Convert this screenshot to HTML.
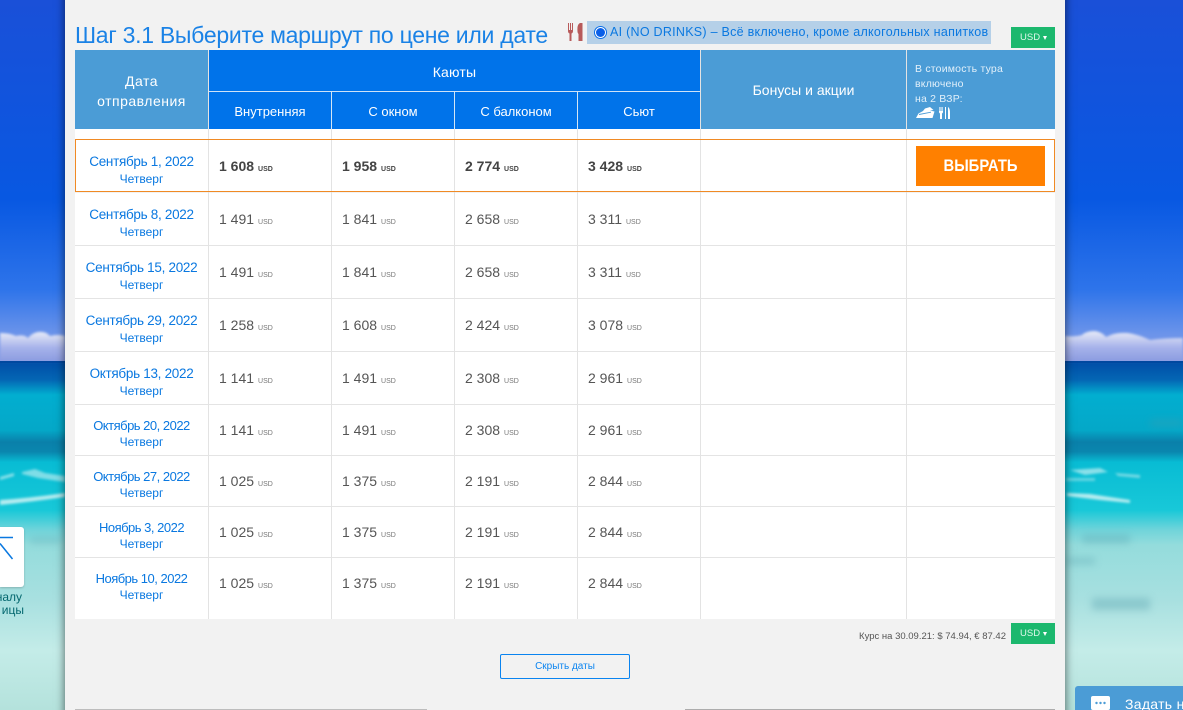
<!DOCTYPE html>
<html lang="ru"><head><meta charset="utf-8"><title>Шаг 3.1</title>
<style>
*{box-sizing:border-box}
html,body{margin:0;padding:0;width:1183px;height:710px;overflow:hidden;background:#b4e2dc;font-family:"Liberation Sans",sans-serif}
#wrap{position:absolute;left:0;top:0;width:1183px;height:710px;overflow:hidden}
.a,.r,.d,.w,.p,.l{position:absolute}
#bg{position:absolute;left:0;top:0}
#main{position:absolute;left:65px;top:-10px;width:1000px;height:730px;background:#f2f2f2;box-shadow:0 0 8px 1px rgba(0,0,0,.5)}
.t{position:absolute;white-space:nowrap}
.h{color:#fff;text-align:center}
.r{left:75px;width:980px;background:#fff;border-bottom:1px solid #e4e4e4}
.d{left:0;width:133px;text-align:center;color:#0a78e0;font-size:13px;line-height:16px;white-space:nowrap;letter-spacing:-.5px}
.d.b{font-size:13.5px;letter-spacing:-.3px}
.w{left:0;width:133px;text-align:center;color:#0a78e0;font-size:12px;line-height:16px}
.p{font-size:14px;line-height:16px;color:#555;white-space:nowrap}
.p small{font-size:7px;margin-left:4px;color:#777}
.b1 .p{font-weight:bold;color:#444}
.b1 .p small{color:#444}
.l{width:1px;background:#e3e3e3;top:129px;height:490px}
.lh{width:1px;background:#d5e6f5;position:absolute}
.usd{position:absolute;left:1011px;width:44px;height:21px;background:#1cb86e;color:#dff7ea;font-size:9.5px;line-height:21px;padding-left:9px}
.usd i{position:absolute;left:32px;top:9px;width:0;height:0;border-left:2.5px solid transparent;border-right:2.5px solid transparent;border-top:4px solid #fff}
</style></head>
<body>
<div id="wrap">
<svg id="bg" width="1183" height="710" viewBox="0 0 1183 710">
<defs>
<linearGradient id="sky" x1="0" y1="0" x2="0" y2="1"><stop offset="0" stop-color="#1a50d8"/><stop offset=".55" stop-color="#0858e2"/><stop offset=".8" stop-color="#2e74ea"/><stop offset=".92" stop-color="#6a93ea"/><stop offset="1" stop-color="#8a9ee6"/></linearGradient>
<linearGradient id="sea" x1="0" y1="0" x2="0" y2="1">
<stop offset="0" stop-color="#004ca6"/><stop offset=".054" stop-color="#0466b4"/><stop offset=".097" stop-color="#02aed0"/><stop offset=".198" stop-color="#04a8c8"/><stop offset=".232" stop-color="#0a80aa"/><stop offset=".26" stop-color="#0a86ae"/><stop offset=".29" stop-color="#08bcd4"/><stop offset=".427" stop-color="#18c8d8"/><stop offset=".484" stop-color="#70d4da"/><stop offset=".527" stop-color="#94dcdc"/><stop offset=".685" stop-color="#a8e0e0"/><stop offset=".83" stop-color="#c4ece8"/><stop offset="1" stop-color="#b4e2dc"/>
</linearGradient>
<linearGradient id="cl" x1="0" y1="0" x2="0" y2="1"><stop offset="0" stop-color="#e8ecf8"/><stop offset=".3" stop-color="#c4ccf0"/><stop offset=".55" stop-color="#a6b2ea"/><stop offset="1" stop-color="#8c9ce0"/></linearGradient>
<filter id="bl"><feGaussianBlur stdDeviation="1.200"/></filter>
<filter id="bl2"><feGaussianBlur stdDeviation="4"/></filter>
</defs>
<rect width="1183" height="362" fill="url(#sky)"/>
<rect y="361" width="1183" height="349" fill="url(#sea)"/>
<path d="M0 333Q10 333 16 336Q24 334 28 338Q32 333 38 332Q46 331 50 336Q58 334 65 336V361H0Z" fill="url(#cl)" filter="url(#bl)"/>
<path d="M1065 336Q1075 337 1082 335Q1086 331 1095 331Q1102 332 1106 337Q1115 332 1128 333Q1140 335 1150 340Q1165 338 1183 338V361H1065Z" fill="url(#cl)" filter="url(#bl)"/>
<rect x="0" y="361" width="65" height="2" fill="#0048a0"/><rect x="1065" y="361" width="118" height="2" fill="#0048a0"/>
<g filter="url(#bl)" fill="#dff6f6">
<path d="M0 500Q30 498 65 493V497Q30 502 0 505Z" opacity=".8"/>
<path d="M0 477L14 473V476L0 480Z" opacity=".6"/>
<path d="M22 472L35 469L45 473L65 476V482L38 478L22 474Z" opacity=".55"/>
<path d="M1067 493L1090 494L1130 500L1130 503L1100 500L1067 496Z" opacity=".8"/>
<path d="M1070 470L1100 468L1108 472L1085 475Z" opacity=".6"/>
<path d="M1115 473L1140 475V478L1118 476Z" opacity=".5"/>
<path d="M1066 478H1095V481H1066Z" opacity=".4"/>
</g>
<g filter="url(#bl2)" fill="#4f9aa8" opacity=".35">
<path d="M1082 535H1130V543H1082Z"/><path d="M1066 558H1095V564H1066Z"/><path d="M1092 598H1150V610H1092Z"/>
<path d="M1150 420H1183V426H1150Z"/><path d="M30 538H60V543H30Z"/>
</g>
</svg>

<div class="a" style="left:0;top:527px;width:24px;height:60px;background:#fff;border-radius:0 3px 3px 0;box-shadow:0 1px 2px rgba(0,0,0,.2)">
<svg width="24" height="60" style="display:block"><path d="M0 10.500H13M0 16.500L12.500 32" stroke="#0a78e0" stroke-width="1.500" fill="none"/></svg>
</div>
<div class="t" style="right:1161px;top:591px;font-size:12px;line-height:13px;color:#04686f">налу</div>
<div class="t" style="right:1159px;top:604px;font-size:12px;line-height:13px;color:#04686f">ицы</div>

<div id="main"></div>

<div class="t" style="left:75px;top:20px;font-size:23px;line-height:30px;color:#1a82e6;letter-spacing:-.27px">Шаг 3.1 Выберите маршрут по цене или дате</div>

<svg class="a" style="left:566px;top:22px" width="18" height="20" viewBox="0 0 18 20"><path d="M2 1V9Q2 11 3.500 11.500V19H5.500V11.500Q7 11 7 9V1H6V8H5V1H4V8H3V1ZM12.500 19V12Q11 11 11.500 5Q12 2 14 1H16.500V19Z" fill="#b85a5a"/></svg>
<div class="a" style="left:587px;top:21px;width:404px;height:23px;background:#b5d0e8"></div>
<div class="a" style="left:594px;top:26px;width:13px;height:13px;border-radius:50%;background:#fff;border:1px solid #0a6fe8"></div>
<div class="a" style="left:596px;top:28px;width:9px;height:9px;border-radius:50%;background:#0a5fe8"></div>
<div class="t" style="left:610px;top:24px;font-size:12.500px;line-height:17px;color:#0a78e0;letter-spacing:.27px">AI (NO DRINKS) – Всё включено, кроме алкогольных напитков</div>

<div class="usd" style="top:27px">USD<i></i></div>

<!-- header -->
<div class="a" style="left:75px;top:50px;width:133px;height:79px;background:#4b9cd6"></div>
<div class="a" style="left:209px;top:50px;width:491px;height:79px;background:#0073ea"></div>
<div class="a" style="left:701px;top:50px;width:205px;height:79px;background:#4b9cd6"></div>
<div class="a" style="left:907px;top:50px;width:148px;height:79px;background:#4b9cd6"></div>
<div class="a" style="left:209px;top:91px;width:491px;height:1px;background:#cfe3f8"></div>
<div class="lh" style="left:331px;top:91px;height:38px"></div>
<div class="lh" style="left:454px;top:91px;height:38px"></div>
<div class="lh" style="left:577px;top:91px;height:38px"></div>
<div class="t h" style="left:75px;top:71px;width:133px;font-size:14px;line-height:20px;letter-spacing:.5px">Дата<br>отправления</div>
<div class="t h" style="left:209px;top:63px;width:491px;font-size:14px;line-height:18px;letter-spacing:.2px">Каюты</div>
<div class="t h" style="left:209px;top:103px;width:122px;font-size:13px;line-height:17px">Внутренняя</div>
<div class="t h" style="left:332px;top:103px;width:122px;font-size:13px;line-height:17px">С окном</div>
<div class="t h" style="left:455px;top:103px;width:122px;font-size:13px;line-height:17px">С балконом</div>
<div class="t h" style="left:578px;top:103px;width:122px;font-size:13px;line-height:17px">Сьют</div>
<div class="t h" style="left:701px;top:81px;width:205px;font-size:14px;line-height:18px">Бонусы и акции</div>
<div class="t" style="left:915px;top:62px;font-size:10.500px;line-height:15px;color:#e2f0fa;letter-spacing:.2px">В стоимость тура<br>включено<br>на 2 ВЗР:</div>
<svg class="a" style="left:915px;top:105px" width="38" height="15" viewBox="0 0 38 15"><path d="M1 13L3.500 8.500L8 6L10 3.500L15 2L18.500 5L15 5.500L19.500 6.500L17.500 13Z" fill="#fff"/><path d="M4 9L16 6.800V7.600L4 10Z" fill="#4b9cd6"/><path d="M24 2V7Q24 8 25 8.500V14H27V8.500Q28 8 28 7V2H27.400V6H26.500V2H25.500V6H24.600V2ZM30 2H31V14H30ZM33 2Q35 3 35 8V14H33Z" fill="#fff"/></svg>

<!-- rows -->
<div class="r b1" style="top:140px;height:52px;border:0">
<div class="d b" style="top:14px">Сентябрь 1, 2022</div><div class="w" style="top:31px">Четверг</div>
<div class="p" style="left:144px;top:18px">1 608<small>USD</small></div><div class="p" style="left:267px;top:18px">1 958<small>USD</small></div><div class="p" style="left:390px;top:18px">2 774<small>USD</small></div><div class="p" style="left:513px;top:18px">3 428<small>USD</small></div>
</div>
<div class="r" style="top:193px;height:53px">
<div class="d b" style="top:14px">Сентябрь 8, 2022</div><div class="w" style="top:31px">Четверг</div>
<div class="p" style="left:144px;top:18px">1 491<small>USD</small></div><div class="p" style="left:267px;top:18px">1 841<small>USD</small></div><div class="p" style="left:390px;top:18px">2 658<small>USD</small></div><div class="p" style="left:513px;top:18px">3 311<small>USD</small></div>
</div>
<div class="r" style="top:246px;height:53px">
<div class="d b" style="top:14px">Сентябрь 15, 2022</div><div class="w" style="top:31px">Четверг</div>
<div class="p" style="left:144px;top:18px">1 491<small>USD</small></div><div class="p" style="left:267px;top:18px">1 841<small>USD</small></div><div class="p" style="left:390px;top:18px">2 658<small>USD</small></div><div class="p" style="left:513px;top:18px">3 311<small>USD</small></div>
</div>
<div class="r" style="top:299px;height:53px">
<div class="d b" style="top:14px">Сентябрь 29, 2022</div><div class="w" style="top:31px">Четверг</div>
<div class="p" style="left:144px;top:18px">1 258<small>USD</small></div><div class="p" style="left:267px;top:18px">1 608<small>USD</small></div><div class="p" style="left:390px;top:18px">2 424<small>USD</small></div><div class="p" style="left:513px;top:18px">3 078<small>USD</small></div>
</div>
<div class="r" style="top:352px;height:53px">
<div class="d b" style="top:14px">Октябрь 13, 2022</div><div class="w" style="top:31px">Четверг</div>
<div class="p" style="left:144px;top:18px">1 141<small>USD</small></div><div class="p" style="left:267px;top:18px">1 491<small>USD</small></div><div class="p" style="left:390px;top:18px">2 308<small>USD</small></div><div class="p" style="left:513px;top:18px">2 961<small>USD</small></div>
</div>
<div class="r" style="top:405px;height:51px">
<div class="d" style="top:13px">Октябрь 20, 2022</div><div class="w" style="top:29px">Четверг</div>
<div class="p" style="left:144px;top:17px">1 141<small>USD</small></div><div class="p" style="left:267px;top:17px">1 491<small>USD</small></div><div class="p" style="left:390px;top:17px">2 308<small>USD</small></div><div class="p" style="left:513px;top:17px">2 961<small>USD</small></div>
</div>
<div class="r" style="top:456px;height:51px">
<div class="d" style="top:13px">Октябрь 27, 2022</div><div class="w" style="top:29px">Четверг</div>
<div class="p" style="left:144px;top:17px">1 025<small>USD</small></div><div class="p" style="left:267px;top:17px">1 375<small>USD</small></div><div class="p" style="left:390px;top:17px">2 191<small>USD</small></div><div class="p" style="left:513px;top:17px">2 844<small>USD</small></div>
</div>
<div class="r" style="top:507px;height:51px">
<div class="d" style="top:13px">Ноябрь 3, 2022</div><div class="w" style="top:29px">Четверг</div>
<div class="p" style="left:144px;top:17px">1 025<small>USD</small></div><div class="p" style="left:267px;top:17px">1 375<small>USD</small></div><div class="p" style="left:390px;top:17px">2 191<small>USD</small></div><div class="p" style="left:513px;top:17px">2 844<small>USD</small></div>
</div>
<div class="r" style="top:558px;height:61px;border:0">
<div class="d" style="top:13px">Ноябрь 10, 2022</div><div class="w" style="top:29px">Четверг</div>
<div class="p" style="left:144px;top:17px">1 025<small>USD</small></div><div class="p" style="left:267px;top:17px">1 375<small>USD</small></div><div class="p" style="left:390px;top:17px">2 191<small>USD</small></div><div class="p" style="left:513px;top:17px">2 844<small>USD</small></div>
</div>
<div class="a" style="left:75px;top:129px;width:980px;height:11px;background:#fff"></div>

<div class="l" style="left:208px;top:50px;height:569px"></div>
<div class="l" style="left:331px"></div><div class="l" style="left:454px"></div><div class="l" style="left:577px"></div>
<div class="l" style="left:700px;top:50px;height:569px"></div><div class="l" style="left:906px;top:50px;height:569px"></div>

<div class="a" style="left:75px;top:139px;width:980px;height:53px;border:1px solid #f08a24"></div>
<div class="a" style="left:916px;top:146px;width:129px;height:40px;background:#ff8000;color:#fff;font-weight:bold;font-size:17px;line-height:40px;text-align:center"><span style="display:inline-block;transform:scaleX(.87)">ВЫБРАТЬ</span></div>

<div class="t" style="right:177px;top:630px;font-size:9.500px;line-height:13px;color:#555">Курс на 30.09.21: $ 74.94, € 87.42</div>
<div class="usd" style="top:623px">USD<i></i></div>

<div class="a" style="left:500px;top:654px;width:130px;height:25px;border:1px solid #0a84f0;border-radius:2px;color:#0a84f0;font-size:10px;line-height:23px;text-align:center">Скрыть даты</div>

<div class="a" style="left:75px;top:709px;width:352px;height:1px;background:#bdbdbd"></div>
<div class="a" style="left:685px;top:709px;width:370px;height:1px;background:#adadad"></div>

<div class="a" style="left:1075px;top:686px;width:108px;height:24px;background:#4b9cd6;border-radius:3px 0 0 0"></div>
<svg class="a" style="left:1090px;top:695px" width="22" height="15" viewBox="0 0 22 15"><rect x="1" y="1" width="19" height="14" rx="2" fill="#fff"/><circle cx="6.500" cy="8" r="1.200" fill="#4b9cd6"/><circle cx="10.500" cy="8" r="1.200" fill="#4b9cd6"/><circle cx="14.500" cy="8" r="1.200" fill="#4b9cd6"/></svg>
<div class="t" style="left:1125px;top:695px;font-size:14px;line-height:18px;color:#fff;letter-spacing:.3px">Задать на</div>
</div>
</body></html>
